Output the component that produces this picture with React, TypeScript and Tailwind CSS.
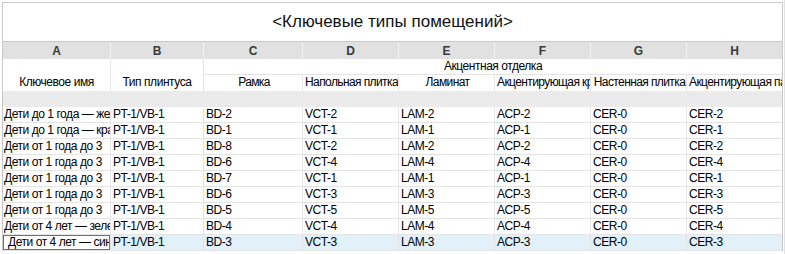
import React from 'react';

const COLS = ['A', 'B', 'C', 'D', 'E', 'F', 'G', 'H'];

const ROWS = [
  ['Дети до 1 года — желтая', 'PT-1/VB-1', 'BD-2', 'VCT-2', 'LAM-2', 'ACP-2', 'CER-0', 'CER-2'],
  ['Дети до 1 года — красная', 'PT-1/VB-1', 'BD-1', 'VCT-1', 'LAM-1', 'ACP-1', 'CER-0', 'CER-1'],
  ['Дети от 1 года до 3', 'PT-1/VB-1', 'BD-8', 'VCT-2', 'LAM-2', 'ACP-2', 'CER-0', 'CER-2'],
  ['Дети от 1 года до 3', 'PT-1/VB-1', 'BD-6', 'VCT-4', 'LAM-4', 'ACP-4', 'CER-0', 'CER-4'],
  ['Дети от 1 года до 3', 'PT-1/VB-1', 'BD-7', 'VCT-1', 'LAM-1', 'ACP-1', 'CER-0', 'CER-1'],
  ['Дети от 1 года до 3', 'PT-1/VB-1', 'BD-6', 'VCT-3', 'LAM-3', 'ACP-3', 'CER-0', 'CER-3'],
  ['Дети от 1 года до 3', 'PT-1/VB-1', 'BD-5', 'VCT-5', 'LAM-5', 'ACP-5', 'CER-0', 'CER-5'],
  ['Дети от 4 лет — зеленая', 'PT-1/VB-1', 'BD-4', 'VCT-4', 'LAM-4', 'ACP-4', 'CER-0', 'CER-4'],
  ['Дети от 4 лет — синяя', 'PT-1/VB-1', 'BD-3', 'VCT-3', 'LAM-3', 'ACP-3', 'CER-0', 'CER-3'],
];

const SUB = ['Рамка', 'Напольная плитка', 'Ламинат', 'Акцентирующая краска', 'Настенная плитка', 'Акцентирующая панель'];

export default function App() {
  return (
    <div className="w-[785px] h-[254px] bg-white pl-[2px] pt-[2px] border-r border-[#e2e2e2] font-['Liberation_Sans',Arial,sans-serif] text-[12px] tracking-[-0.45px] text-black">
      <div className="w-[781px] border-l border-t border-r border-[#c8c8c8]">
        {/* title */}
        <div className="h-[39px] border-b border-[#c8c8c8] flex items-center justify-center text-[17px] tracking-normal text-[#111]">
          &lt;Ключевые типы помещений&gt;
        </div>

        <div className="grid grid-cols-[108px_93px_99px_96px_96px_96px_96px_95px]">
          {/* column letters */}
          {COLS.map((c, i) => (
            <div
              key={c}
              className={`h-[17px] bg-[#e1e1e1] flex items-center justify-center font-bold tracking-normal text-[12px] text-[#3a3a3a] ${i < 7 ? 'border-r border-[#f3f3f3]' : ''}`}
            >
              {c}
            </div>
          ))}

          {/* header rows */}
          <div className="row-span-2 h-[32px] border-r border-[#e4e4e4] flex items-end justify-center pb-[1px] leading-[15px]">
            Ключевое имя
          </div>
          <div className="row-span-2 h-[32px] border-r border-[#e4e4e4] flex items-end justify-center pb-[1px] leading-[15px]">
            Тип плинтуса
          </div>
          <div className="col-span-6 h-[16px] border-b border-[#e4e4e4] flex items-center justify-center leading-[15px]">
            Акцентная отделка
          </div>
          {SUB.map((s, i) => (
            <div
              key={s}
              className={`h-[16px] leading-[15px] pl-[2px] tracking-[-0.6px] text-center whitespace-nowrap overflow-hidden ${i < 5 ? 'border-r border-[#e4e4e4]' : ''}`}
            >
              {s}
            </div>
          ))}

          {/* blank band */}
          <div className="col-span-8 h-[16px] bg-[#ebebeb]" />

          {/* data */}
          {ROWS.map((row, r) => {
            const last = r === ROWS.length - 1;
            return row.map((cell, c) => {
              const selected = last && c === 0;
              return (
                <div
                  key={`${r}-${c}`}
                  className={`relative h-[16px] border-b border-[#e4e4e4] leading-[15px] whitespace-nowrap overflow-hidden ${c < 7 ? 'border-r' : ''} ${c === 0 ? 'pl-[1px]' : 'pl-[2px]'} ${last && !selected ? 'bg-[#e1f0f9]' : 'bg-white'}`}
                >
                  {selected ? (
                    <>
                      <span className="pl-[4px]">{cell}</span>
                      <div className="absolute left-[-1px] top-[-1px] w-[109px] h-[17px] border-2 border-[#1a8bcf]" />
                    </>
                  ) : (
                    cell
                  )}
                </div>
              );
            });
          })}
        </div>
      </div>
    </div>
  );
}
